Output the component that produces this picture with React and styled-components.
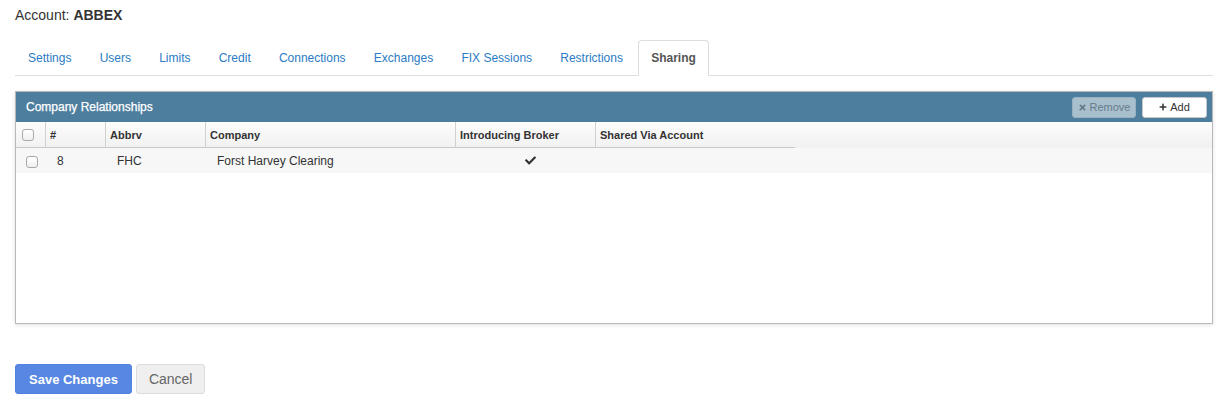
import React from "react";
import styled, { createGlobalStyle } from "styled-components";
import { FaCheck, FaTimes, FaPlus } from "react-icons/fa";

const GlobalStyle = createGlobalStyle`
  html, body { margin: 0; padding: 0; background: #fff; }
  body {
    font-family: "Liberation Sans", Arial, Helvetica, sans-serif;
    color: #333;
    -webkit-font-smoothing: antialiased;
  }
  * { box-sizing: border-box; }
`;

const Page = styled.div`
  padding: 5px 14px 0 15px;
  width: 1227px;
`;

const Title = styled.div`
  font-size: 14px;
  line-height: 20px;
  color: #333;
  b { font-weight: bold; }
`;

const TabList = styled.ul`
  list-style: none;
  margin: 15px 0 0;
  padding: 0;
  display: flex;
  border-bottom: 1px solid #ddd;
`;

const TabItem = styled.li`
  margin: 0 2px -1px 0;
`;

const Tab = styled.a`
  display: block;
  padding: 0 12.1px;
  line-height: 34px;
  font-size: 12px;
  text-decoration: none;
  cursor: pointer;
  border: 1px solid ${(p) => (p.$active ? "#ddd" : "transparent")};
  border-bottom-color: ${(p) => (p.$active ? "#fff" : "transparent")};
  border-radius: 4px 4px 0 0;
  background: ${(p) => (p.$active ? "#fff" : "transparent")};
  color: ${(p) => (p.$active ? "#555" : "#2b7bc4")};
  font-weight: ${(p) => (p.$active ? "bold" : "normal")};
`;

const Panel = styled.div`
  margin-top: 15px;
  border: 1px solid #b9b9b9;
  box-shadow: 0 1px 4px rgba(0, 0, 0, 0.12);
  background: #fff;
  height: 233px;
  display: flex;
  flex-direction: column;
`;

const PanelHeading = styled.div`
  height: 30px;
  background: #4d7e9e;
  display: flex;
  align-items: center;
  justify-content: space-between;
  padding: 0 5px 0 10px;
  flex-shrink: 0;
`;

const HeadingTitle = styled.span`
  color: #fff;
  font-size: 12px;
  -webkit-text-stroke: 0.25px #fff;
`;

const HeadingActions = styled.div`
  display: flex;
  gap: 6px;
`;

const SmallButton = styled.button`
  height: 21px;
  width: ${(p) => p.$width}px;
  display: flex;
  align-items: center;
  justify-content: center;
  gap: 3px;
  font-family: inherit;
  font-size: 11px;
  border-radius: 3px;
  padding: 0;
  border: 1px solid ${(p) => (p.$disabled ? "#98b0c1" : "#c8c8c8")};
  background: ${(p) => (p.$disabled ? "#a8bfcd" : "#fff")};
  color: ${(p) => (p.$disabled ? "#667c8b" : "#333")};
  cursor: ${(p) => (p.$disabled ? "default" : "pointer")};
  svg { flex-shrink: 0; }
`;

const Grid = styled.div`
  flex: 1;
  display: flex;
  flex-direction: column;
`;

const HeaderRow = styled.div`
  display: flex;
  height: 26px;
  background: linear-gradient(#fcfcfc, #f1f1f1);
`;

const HeaderCell = styled.div`
  width: ${(p) => p.$w}px;
  flex-shrink: 0;
  border-left: ${(p) => (p.$first ? "none" : "1px solid #d0d0d0")};
  border-bottom: 1px solid #c9c9c9;
  display: flex;
  align-items: center;
  padding-left: ${(p) => (p.$first ? 6 : 4)}px;
  font-size: 11px;
  font-weight: bold;
  color: #333;
  white-space: nowrap;
`;

const DataRow = styled.div`
  display: flex;
  height: 25px;
  background: #f7f7f7;
`;

const DataCell = styled.div`
  width: ${(p) => p.$w}px;
  flex-shrink: 0;
  display: flex;
  align-items: center;
  justify-content: ${(p) => (p.$center ? "center" : "flex-start")};
  padding-left: ${(p) => (p.$center ? 0 : p.$first ? 10 : 12)}px;
  padding-top: ${(p) => (p.$first ? 3 : 0)}px;
  font-size: 12px;
  color: #333;
  white-space: nowrap;
`;

const Checkbox = styled.span`
  display: inline-block;
  width: 12px;
  height: 12px;
  border: 1px solid #a9a9a9;
  border-radius: 3px;
  background: linear-gradient(#fff, #efefef);
`;

const FormActions = styled.div`
  margin-top: 40px;
  display: flex;
  gap: 4px;
`;

const Button = styled.button`
  height: 30px;
  padding: 0 ${(p) => (p.$primary ? 13 : 12)}px;
  font-family: inherit;
  font-size: ${(p) => (p.$primary ? "13px" : "14px")};
  font-weight: ${(p) => (p.$primary ? "bold" : "normal")};
  border-radius: 3px;
  border: 1px solid ${(p) => (p.$primary ? "#5282df" : "#dcdcdc")};
  background: ${(p) => (p.$primary ? "#5787e3" : "#efefef")};
  color: ${(p) => (p.$primary ? "#fff" : "#666")};
  cursor: pointer;
`;

const tabs = [
  "Settings",
  "Users",
  "Limits",
  "Credit",
  "Connections",
  "Exchanges",
  "FIX Sessions",
  "Restrictions",
  "Sharing",
];

const columns = [
  { key: "sel", label: null, w: 29 },
  { key: "id", label: "#", w: 60 },
  { key: "abbrv", label: "Abbrv", w: 100 },
  { key: "company", label: "Company", w: 250 },
  { key: "ib", label: "Introducing Broker", w: 140 },
  { key: "via", label: "Shared Via Account", w: 200 },
];

const rows = [
  { id: 8, abbrv: "FHC", company: "Forst Harvey Clearing", ib: true, via: "" },
];

export default function App() {
  return (
    <>
      <GlobalStyle />
      <Page>
        <Title>
          Account: <b>ABBEX</b>
        </Title>
        <TabList>
          {tabs.map((t) => (
            <TabItem key={t}>
              <Tab $active={t === "Sharing"}>{t}</Tab>
            </TabItem>
          ))}
        </TabList>

        <Panel>
          <PanelHeading>
            <HeadingTitle>Company Relationships</HeadingTitle>
            <HeadingActions>
              <SmallButton $disabled $width={64}>
                <FaTimes size={9} />
                Remove
              </SmallButton>
              <SmallButton $width={65}>
                <FaPlus size={8} />
                Add
              </SmallButton>
            </HeadingActions>
          </PanelHeading>
          <Grid>
            <HeaderRow>
              {columns.map((c, i) => (
                <HeaderCell key={c.key} $w={c.w} $first={i === 0}>
                  {i === 0 ? <Checkbox /> : c.label}
                </HeaderCell>
              ))}
            </HeaderRow>
            {rows.map((r) => (
              <DataRow key={r.id}>
                <DataCell $w={29} $first>
                  <Checkbox />
                </DataCell>
                <DataCell $w={60}>{r.id}</DataCell>
                <DataCell $w={100}>{r.abbrv}</DataCell>
                <DataCell $w={250}>{r.company}</DataCell>
                <DataCell $w={140} $center>
                  {r.ib && <FaCheck size={11} color="#333" style={{ marginLeft: 10 }} />}
                </DataCell>
                <DataCell $w={200}>{r.via}</DataCell>
              </DataRow>
            ))}
          </Grid>
        </Panel>

        <FormActions>
          <Button $primary>Save Changes</Button>
          <Button>Cancel</Button>
        </FormActions>
      </Page>
    </>
  );
}
